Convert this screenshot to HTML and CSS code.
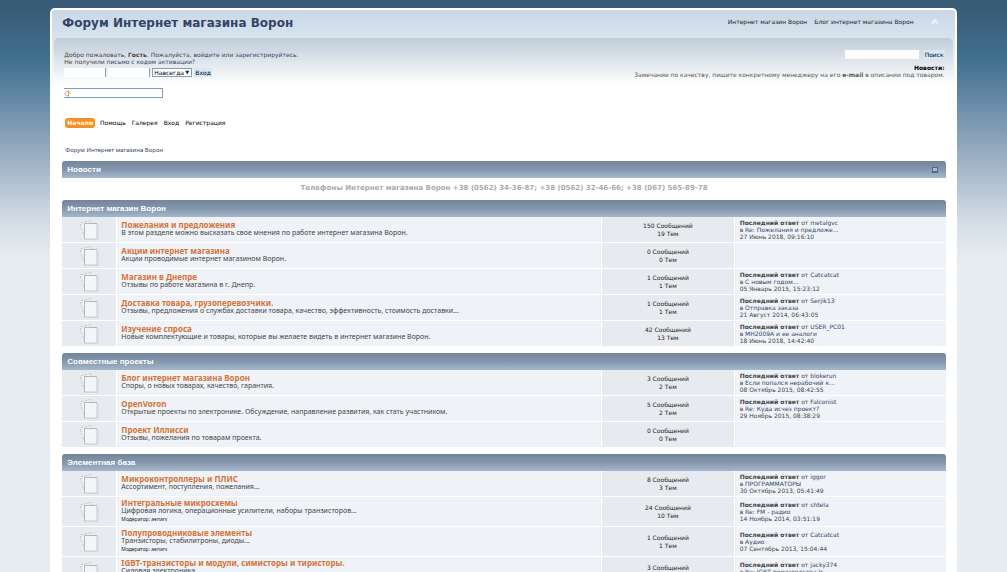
FILE: index.html
```html
<!DOCTYPE html>
<html lang="ru">
<head>
<meta charset="utf-8">
<title>Форум Интернет магазина Ворон</title>
<link rel="stylesheet" href="styles.css">
</head>
<body>
<svg class="sprites" aria-hidden="true">
  <symbol id="board" viewBox="0 0 20 22">
    <path d="M1 3.500 12 1.500 14 17 4 19z" fill="#f1f3f5"/>
    <path d="M1.500 4 12 1.500V4M1.500 5 5 17.500" fill="none" stroke="#c3c7cc" stroke-dasharray="3 1"/>
    <path d="M5.500 4.500h12.500v15.500h-12.500z" fill="#f3f5f8" stroke="#c6cacf"/>
    <path d="M5.500 20V4.500H18" fill="none" stroke="#b3b7bd"/>
    <path d="M6 20.500h13V6" fill="none" stroke="#d3d6da"/>
  </symbol>
</svg>
<div class="wrapper">
  <header class="top">
    <h1><a href="#">Форум Интернет магазина Ворон</a></h1>
    <nav class="sites"><a href="#">Интернет магазин Ворон</a><a href="#">Блог интернет магазина Ворон</a></nav>
    <button class="collapse" type="button" aria-label="Свернуть"><svg viewBox="0 0 8 7"><path d="M1 5.500 4 2.500 7 5.500" fill="none" stroke="#f0f4f9" stroke-width="2"/></svg></button>
  </header>
  <div class="content">
    <div class="upper">
      <form class="login">
        <p>Добро пожаловать, <b>Гость</b>. Пожалуйста, <a href="#">войдите</a> или <a href="#">зарегистрируйтесь</a>.</p>
        <p>Не получили <a href="#">письмо с кодом активации?</a></p>
        <div class="fields">
          <input type="text" aria-label="Имя пользователя">
          <input type="password" aria-label="Пароль">
          <span class="pick"><select aria-label="Время"><option>Навсегда</option></select></span>
          <button type="button">Вход</button>
        </div>
        <div class="openid">
          <svg viewBox="0 0 8 8"><path d="M4 2.500C0 2.500 0 6.500 4 7" fill="none" stroke="#a9a9a9"/><path d="M4.500 7.500V1M4.500 3 7 4.500" fill="none" stroke="#f0a040"/></svg>
          <input type="text" aria-label="OpenID">
        </div>
      </form>
      <div class="side">
        <form class="search"><input type="text" aria-label="Поиск"><button type="button">Поиск</button></form>
        <h2>Новости:</h2>
        <p>Замечание по качеству, пишите конкретному менеджеру на его <b>e-mail</b> в описании под товаром.</p>
      </div>
    </div>
    <nav class="menu"><a class="active" href="#">Начало</a><a href="#">Помощь</a><a href="#">Галерея</a><a href="#">Вход</a><a href="#">Регистрация</a></nav>
    <nav class="crumbs"><a href="#">Форум Интернет магазина Ворон</a></nav>
    <main>
      <h2 class="bar">Новости <button type="button" aria-label="Свернуть новости"></button></h2>
      <p class="phones">Телефоны Интернет магазина Ворон +38 (0562) 34-36-87; +38 (0562) 32-46-66; +38 (067) 565-89-78</p>

      <section>
        <h2 class="bar">Интернет магазин Ворон</h2>
        <table class="boards">
          <tr><td class="icon"><svg><use href="#board"/></svg></td><td class="info"><h3><a href="#">Пожелания и предложения</a></h3><p>В этом разделе можно высказать свое мнения по работе интернет магазина Ворон.</p></td><td class="stats">150 Сообщений<br>19 Тем</td><td class="last"><b>Последний ответ</b> от <a href="#">metalgvc</a><br>в <a href="#">Re: Пожелания и предложе...</a><br>27 Июнь 2018, 09:16:10</td></tr>
          <tr><td class="icon"><svg><use href="#board"/></svg></td><td class="info"><h3><a href="#">Акции интернет магазина</a></h3><p>Акции проводимые интернет магазином Ворон.</p></td><td class="stats">0 Сообщений<br>0 Тем</td><td class="last"></td></tr>
          <tr><td class="icon"><svg><use href="#board"/></svg></td><td class="info"><h3><a href="#">Магазин в Днепре</a></h3><p>Отзывы по работе магазина в г. Днепр.</p></td><td class="stats">1 Сообщений<br>1 Тем</td><td class="last"><b>Последний ответ</b> от <a href="#">Catcatcat</a><br>в <a href="#">С новым годом...</a><br>05 Январь 2015, 15:23:12</td></tr>
          <tr><td class="icon"><svg><use href="#board"/></svg></td><td class="info"><h3><a href="#">Доставка товара, грузоперевозчики.</a></h3><p>Отзывы, предложения о службах доставки товара, качество, эффективность, стоимость доставки...</p></td><td class="stats">1 Сообщений<br>1 Тем</td><td class="last"><b>Последний ответ</b> от <a href="#">Serjik13</a><br>в <a href="#">Отправка заказа</a><br>21 Август 2014, 06:43:05</td></tr>
          <tr><td class="icon"><svg><use href="#board"/></svg></td><td class="info"><h3><a href="#">Изучение спроса</a></h3><p>Новые комплектующие и товары, которые вы желаете видеть в интернет магазине Ворон.</p></td><td class="stats">42 Сообщений<br>13 Тем</td><td class="last"><b>Последний ответ</b> от <a href="#">USER_PC01</a><br>в <a href="#">MH2009A и ее аналоги</a><br>18 Июнь 2018, 14:42:40</td></tr>
        </table>
      </section>

      <section>
        <h2 class="bar">Совместные проекты</h2>
        <table class="boards">
          <tr><td class="icon"><svg><use href="#board"/></svg></td><td class="info"><h3><a href="#">Блог интернет магазина Ворон</a></h3><p>Споры, о новых товарах, качество, гарантия.</p></td><td class="stats">3 Сообщений<br>2 Тем</td><td class="last"><b>Последний ответ</b> от <a href="#">blokerun</a><br>в <a href="#">Если попался нерабочий к...</a><br>08 Октябрь 2015, 08:42:55</td></tr>
          <tr><td class="icon"><svg><use href="#board"/></svg></td><td class="info"><h3><a href="#">OpenVoron</a></h3><p>Открытые проекты по электронике. Обсуждение, направление развития, как стать участником.</p></td><td class="stats">5 Сообщений<br>2 Тем</td><td class="last"><b>Последний ответ</b> от <a href="#">Falconist</a><br>в <a href="#">Re: Куда исчез проект?</a><br>29 Ноябрь 2015, 08:38:29</td></tr>
          <tr><td class="icon"><svg><use href="#board"/></svg></td><td class="info"><h3><a href="#">Проект Иллисси</a></h3><p>Отзывы, пожелания по товарам проекта.</p></td><td class="stats">0 Сообщений<br>0 Тем</td><td class="last"></td></tr>
        </table>
      </section>

      <section>
        <h2 class="bar">Элементная база</h2>
        <table class="boards">
          <tr><td class="icon"><svg><use href="#board"/></svg></td><td class="info"><h3><a href="#">Микроконтроллеры и ПЛИС</a></h3><p>Ассортимент, поступления, пожелания...</p></td><td class="stats">8 Сообщений<br>3 Тем</td><td class="last"><b>Последний ответ</b> от <a href="#">iggor</a><br>в <a href="#">ПРОГРАММАТОРЫ</a><br>30 Октябрь 2013, 05:41:49</td></tr>
          <tr><td class="icon"><svg><use href="#board"/></svg></td><td class="info"><h3><a href="#">Интегральные микросхемы</a></h3><p>Цифровая логика, операционные усилители, наборы транзисторов...</p><p class="mod">Модератор: aenarv</p></td><td class="stats">24 Сообщений<br>10 Тем</td><td class="last"><b>Последний ответ</b> от <a href="#">shtela</a><br>в <a href="#">Re: FM - радио</a><br>14 Ноябрь 2014, 03:51:19</td></tr>
          <tr><td class="icon"><svg><use href="#board"/></svg></td><td class="info"><h3><a href="#">Полупроводниковые элементы</a></h3><p>Транзисторы, стабилитроны, диоды...</p><p class="mod">Модератор: aenarv</p></td><td class="stats">1 Сообщений<br>1 Тем</td><td class="last"><b>Последний ответ</b> от <a href="#">Catcatcat</a><br>в <a href="#">Аудио</a><br>07 Сентябрь 2013, 15:04:44</td></tr>
          <tr><td class="icon"><svg><use href="#board"/></svg></td><td class="info"><h3><a href="#">IGBT-транзисторы и модули, симисторы и тиристоры.</a></h3><p>Силовая электроника.</p><p class="mod">Модератор: aenarv</p></td><td class="stats">3 Сообщений<br>3 Тем</td><td class="last"><b>Последний ответ</b> от <a href="#">jacky374</a><br>в <a href="#">Re: IGBT производства Ir...</a><br>12 Май 2015, 10:20:31</td></tr>
        </table>
      </section>
    </main>
  </div>
</div>
</body>
</html>
```
FILE: styles.css
```css
* { box-sizing: border-box; }
html { background: #e7ecf0; }
body {
  margin: 0;
  padding-top: 8px;
  height: 100vh;
  overflow: hidden;
  background: linear-gradient(#375a75 0, #3a607d 20px, #41708f 60px, #6f90ac 110px, #9db1c4 160px, #d3dce5 220px, #e7ecf0 260px) no-repeat;
  color: #444;
  font: 6px/7px Verdana, "DejaVu Sans", sans-serif;
}
h1, h2, h3, p { margin: 0; }
a { color: #334466; text-decoration: none; }
button, input, select { margin: 0; border: 0; padding: 0; font: inherit; color: #000; }
.sprites { display: none; }

.wrapper {
  width: 90%;
  min-height: 100%;
  margin: 0 auto;
  border: 2px solid #fff;
  border-bottom: 0;
  border-radius: 5px 5px 0 0;
  background: #fff linear-gradient(#c9d7e6, #dbe5ef 32px, #fff 80px);
}
.top { display: flex; align-items: center; height: 28px; padding: 0 16px 2px 10px; }
.top h1 { flex: 1; font-size: 12px; line-height: 16px; }
.sites { display: flex; gap: 7px; margin-right: 17px; padding-bottom: 4px; }
.sites a { color: #222; }
.collapse { display: flex; padding-bottom: 4px; background: none; }
.collapse svg { width: 8px; height: 7px; }

.content {
  margin: 0 2px;
  padding: 12px 7px 0 8px;
  border-radius: 5px 5px 0 0;
  background: #fff linear-gradient(#bfccd9, #dde4eb 22px, #fff 46px);
}
.upper { display: flex; justify-content: space-between; height: 68px; padding: 0 1px 0 2px; }
.login { padding-top: 1px; }
.fields { display: flex; gap: 2px; margin-top: 3px; height: 9px; }
.fields input { width: 42px; border-right: 1px solid #7f9db9; background: #fff; }
.pick { display: flex; align-items: center; width: 40px; border: 1px solid #7f9db9; background: #fff; }
.pick select { flex: 1; min-width: 0; padding-left: 1px; appearance: none; background: none; }
.pick::after { content: "▼"; width: 6px; color: #222; font-size: 5px; }
.fields button, .search button { background: #d5e8f7; padding: 0 1px; }
.openid { display: flex; width: 99px; height: 10px; margin-top: 11px; border: 1px solid #7f9db9; border-left: 0; background: #fff; }
.openid svg { width: 8px; height: 8px; }
.openid input { flex: 1; min-width: 0; background: none; }
.side { text-align: right; color: #555; }
.search { display: flex; justify-content: flex-end; gap: 5px; height: 9px; }
.search input { width: 74px; background: #fff; }
.side h2 { margin-top: 5px; font-size: 6px; line-height: 7px; color: #000; }

.menu { display: flex; gap: 4px; padding-left: 3px; }
.menu a { padding: 0 1px; line-height: 10px; color: #000; }
.menu .active { padding: 0 2px; border-radius: 3px; background: #f59120; color: #fff; font-weight: bold; }
.crumbs { margin: 19px 3px 7px; font-family: "Noto Sans", sans-serif; }

.bar {
  display: flex;
  align-items: center;
  justify-content: space-between;
  height: 17px;
  padding: 0 8px 0 5px;
  border-radius: 3px 3px 0 0;
  background: linear-gradient(#738599, #8497ae 50%, #a5b7cb);
  color: #fff;
  font: bold 8px/17px Arial, "Liberation Sans", sans-serif;
}
.bar button { width: 6px; height: 6px; border: 1px solid #536a84; border-bottom-width: 2px; background: #a9bacb; }
.phones { padding: 5px 0 6px; text-align: center; color: #aaa; font-size: 7px; line-height: 11px; font-weight: bold; }

section { margin-bottom: 6px; }
.boards { width: 100%; table-layout: fixed; border-collapse: separate; border-spacing: 0; }
.boards td { height: 26px; padding: 0; border-bottom: 1px solid #fff; vertical-align: middle; background: #eff3f7; }
.boards td + td { border-left: 1px solid #fff; }
.boards .icon { width: 54px; background: #e7eaef; }
.icon svg { display: block; width: 20px; height: 22px; margin: 0 auto; }
.boards .info { padding: 1px 0 3px 4px; font: 7px/8px "Noto Sans", sans-serif; }
.info h3 { font-size: 8px; line-height: 9px; }
.info h3 a { color: #d4743a; }
.boards .mod { font-size: 5px; color: #222; }
.boards .stats { width: 15%; text-align: center; line-height: 8px; color: #222; background: #e7eaef; }
.boards .last { width: 24%; padding-left: 5px; }
```
